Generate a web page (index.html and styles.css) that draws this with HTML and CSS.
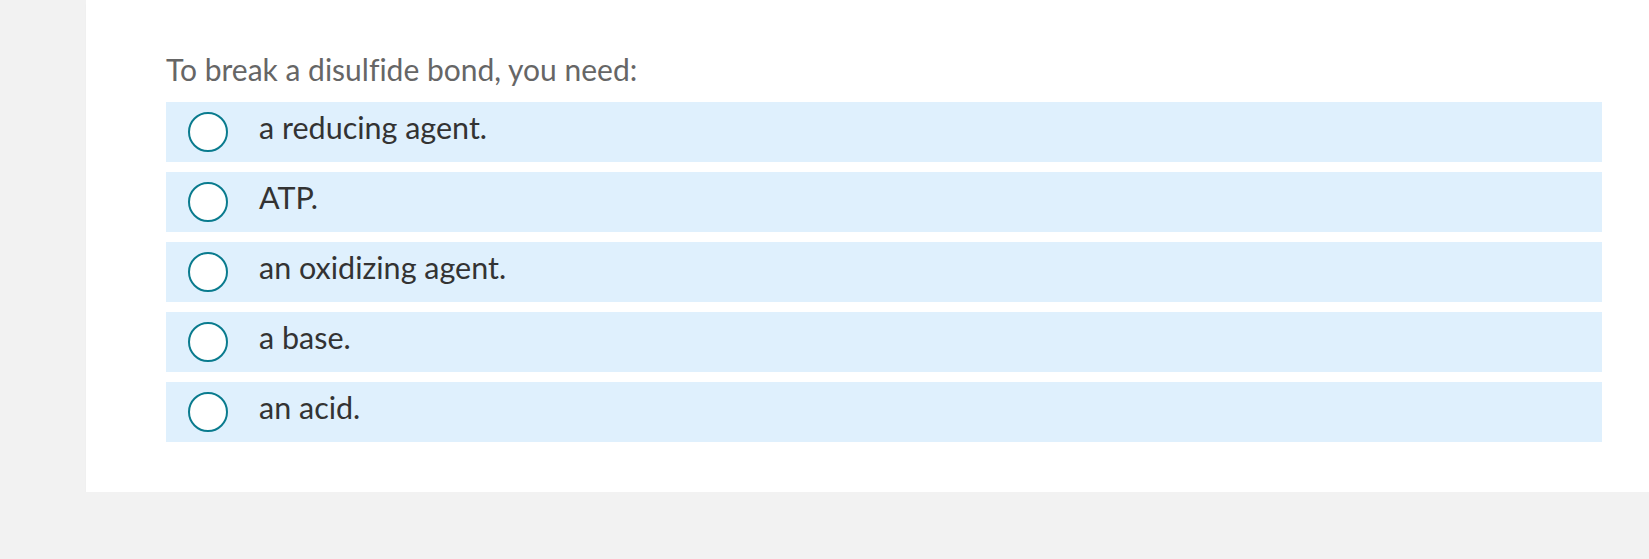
FILE: index.html
```html
<!DOCTYPE html>
<html>
<head>
<meta charset="utf-8">
<link rel="stylesheet" href="styles.css">
</head>
<body>
<div class="page">
  <div class="card">
    <p class="question">To break a disulfide bond, you need:</p>
    <div class="options">
      <label class="option"><span class="radio"></span><span class="label">a reducing agent.</span></label>
      <label class="option"><span class="radio"></span><span class="label">ATP.</span></label>
      <label class="option"><span class="radio"></span><span class="label">an oxidizing agent.</span></label>
      <label class="option"><span class="radio"></span><span class="label">a base.</span></label>
      <label class="option"><span class="radio"></span><span class="label">an acid.</span></label>
    </div>
  </div>
</div>
</body>
</html>
```
FILE: styles.css
```css
html, body {
  margin: 0;
  padding: 0;
  background: #f2f2f2;
  overflow: hidden;
  font-family: Lato, "Liberation Sans", sans-serif;
  font-variant-ligatures: none;
}
.page {
  padding-left: 86px;
  width: 1700px;
}
.card {
  background: #ffffff;
  width: 1436px;
  padding: 51px 80px 50px 80px;
  box-shadow: 0 3px 2px -1px rgba(0, 0, 0, 0.13);
}
.question {
  margin: 0 0 15px 0;
  font-size: 30px;
  line-height: 36px;
  color: #666666;
}
.options {
  display: flex;
  flex-direction: column;
  gap: 10px;
}
.option {
  display: flex;
  align-items: center;
  height: 60px;
  background: #dff0fd;
  padding-left: 22px;
}
.radio {
  box-sizing: border-box;
  width: 40px;
  height: 40px;
  border: 2px solid #0a7b8e;
  border-radius: 50%;
  background: #ffffff;
  flex: none;
}
.label {
  margin-left: 31px;
  font-size: 30.5px;
  line-height: 36px;
  color: #333333;
  position: relative;
  top: -5px;
}
```
